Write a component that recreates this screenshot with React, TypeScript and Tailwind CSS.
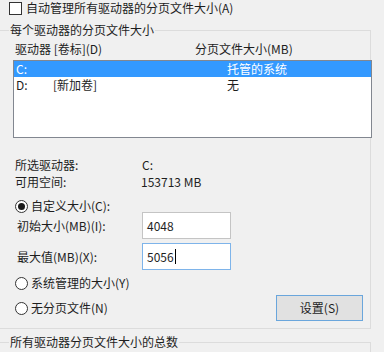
import React from "react"

type Drive = { letter: string; label: string; size: string; selected?: boolean }

const drives: Drive[] = [
  { letter: "C:", label: "", size: "托管的系统", selected: true },
  { letter: "D:", label: "[新加卷]", size: "无" },
]

function Radio({ checked }: { checked?: boolean }) {
  return (
    <span className="flex h-[13px] w-[13px] shrink-0 items-center justify-center rounded-full border border-[#333] bg-white">
      {checked && <span className="h-[7px] w-[7px] rounded-full bg-[#1a1a1a]" />}
    </span>
  )
}

function SizeInput({ value, focused }: { value: string; focused?: boolean }) {
  return (
    <div
      className={
        focused
          ? "flex h-[27px] w-[89px] items-center border border-[#7eb4ea] bg-white pl-[4px]"
          : "flex h-[27px] w-[89px] items-center border border-[#c4c4c4] bg-white pl-[4px]"
      }
    >
      <span>{value}</span>
      {focused && <span className="ml-[1px] h-[15px] w-[1px] bg-black" />}
    </div>
  )
}

export default function App() {
  return (
    <div className="h-[352px] w-[384px] overflow-hidden bg-[#f0f0f0] font-['Noto_Sans_CJK_SC',sans-serif] text-[12px] leading-[16px] text-[#1e1e1e]">
      {/* auto manage checkbox */}
      <div className="flex h-[16px] items-center pl-[9px]">
        <span className="h-[13px] w-[13px] border border-[#333] bg-white" />
        <span className="ml-[4px]">自动管理所有驱动器的分页文件大小(A)</span>
      </div>

      {/* per-drive group (left edge is cut off in the screenshot) */}
      <fieldset className="ml-[-3px] mt-[6px] h-[307px] w-[374px] border border-[#dcdcdc]">
        <legend className="ml-[11px] px-[1px]">每个驱动器的分页文件大小</legend>

        <div className="mt-[3px] flex h-[16px] pl-[17px]">
          <span className="w-[180px]">驱动器 [卷标](D)</span>
          <span>分页文件大小(MB)</span>
        </div>

        <div className="mr-[-2px] ml-[15px] mt-[3px] h-[78px] w-[359px] border border-[#828790] bg-white">
          {drives.map((d) => (
            <div
              key={d.letter}
              className={
                d.selected
                  ? "flex h-[16px] items-center bg-[#3399ff] pl-[2px] text-white"
                  : "flex h-[16px] items-center pl-[2px]"
              }
            >
              <span className="flex w-[211px]">
                <span className="w-[37px]">{d.letter}</span>
                <span>{d.label}</span>
              </span>
              <span>{d.size}</span>
            </div>
          ))}
        </div>

        <div className="mt-[19px] flex h-[16px] pl-[17px]">
          <span className="w-[127px]">所选驱动器:</span>
          <span>C:</span>
        </div>
        <div className="mt-[1px] flex h-[16px] pl-[17px]">
          <span className="w-[126px]">可用空间:</span>
          <span>153713 MB</span>
        </div>

        <div className="mt-[8px] flex h-[16px] items-center gap-[3px] pl-[17px]">
          <Radio checked />
          <span>自定义大小(C):</span>
        </div>

        <div className="mt-[-2px] flex items-center pl-[19px]">
          <span className="w-[125px]">初始大小(MB)(I):</span>
          <SizeInput value="4048" />
        </div>
        <div className="mt-[4px] flex items-center pl-[19px]">
          <span className="w-[125px]">最大值(MB)(X):</span>
          <SizeInput value="5056" focused />
        </div>

        <div className="mt-[5px] flex h-[16px] items-center gap-[3px] pl-[17px]">
          <Radio />
          <span>系统管理的大小(Y)</span>
        </div>

        <div className="mt-[4px] flex h-[26px] items-center pl-[17px] pr-[7px]">
          <Radio />
          <span className="ml-[3px]">无分页文件(N)</span>
          <button className="ml-auto h-[26px] w-[87px] border border-[#6aa6dc] bg-[#e1e1e1] text-[12px] leading-[16px]">
            设置(S)
          </button>
        </div>
      </fieldset>

      {/* totals group */}
      <fieldset className="ml-[-3px] mt-[5px] h-[60px] w-[374px] border border-[#dcdcdc]">
        <legend className="ml-[11px] px-[1px]">所有驱动器分页文件大小的总数</legend>
      </fieldset>
    </div>
  )
}
